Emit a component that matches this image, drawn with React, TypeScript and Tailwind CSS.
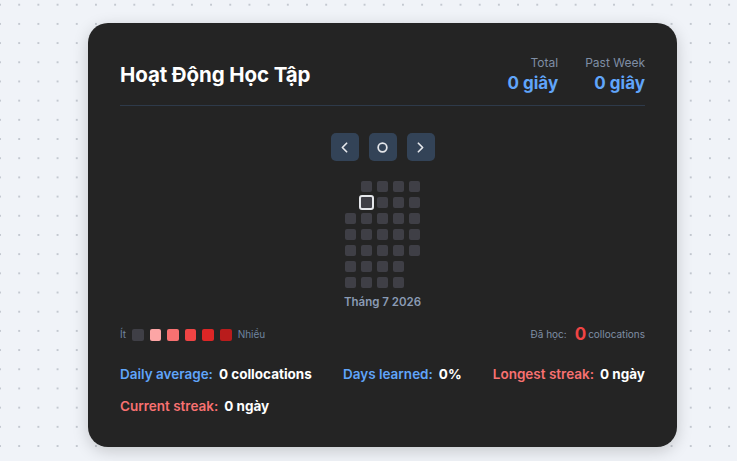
import React from "react";

const cellColors = ["#3f3f46", "#fca5a5", "#f87171", "#ef4444", "#dc2626", "#b91c1c"];

function Heatmap() {
  // July 2026, Monday-start rows, columns are weeks. July 1 = Wednesday (row 2)
  const startRow = 2;
  const days = 31;
  const cols: (number | null)[][] = [];
  for (let c = 0; c < 5; c++) {
    const col: (number | null)[] = [];
    for (let r = 0; r < 7; r++) {
      const idx = c * 7 + r - startRow;
      col.push(idx >= 0 && idx < days ? idx + 1 : null);
    }
    cols.push(col);
  }
  return (
    <div className="flex gap-[5px]">
      {cols.map((col, ci) => (
        <div key={ci} className="flex flex-col gap-[5px]">
          {col.map((d, ri) =>
            d === null ? (
              <div key={ri} className="w-[11px] h-[11px]" />
            ) : d === 7 ? (
              <div key={ri} className="w-[11px] h-[11px] relative">
                <div className="absolute -inset-[2px] rounded-[3px] border-2 border-[#e5e7eb] bg-[#3f3f46]" />
              </div>
            ) : (
              <div key={ri} className="w-[11px] h-[11px] rounded-[2px] bg-[#3f3f46]" />
            )
          )}
        </div>
      ))}
    </div>
  );
}

export default function App() {
  return (
    <div
      className="min-h-screen w-full bg-[#f0f3f8] bg-[radial-gradient(circle,#c3c8d0_1px,transparent_1.3px)] bg-[size:19.2px_19.2px] bg-[position:9.6px_-4.9px] pt-[23px] pb-[14px] pl-[88px]"
      style={{ fontFamily: "Inter, 'Noto Sans', sans-serif" }}
    >
      <div className="w-[589px] rounded-[20px] bg-[#242424] px-8 pt-8 pb-[31px] shadow-[0_4px_16px_rgba(0,0,0,0.18)]">
        <div className="flex items-center justify-between border-b border-[#2e3a4a] pb-[10px]">
          <h1 className="text-[20.5px] font-bold text-white tracking-[-0.1px]">Hoạt Động Học Tập</h1>
          <div className="flex gap-[27px]">
            <div className="text-right">
              <div className="text-[12px] leading-4 text-[#7f8ea4]">Total</div>
              <div className="text-[17px] leading-6 font-bold text-[#60a5fa]">0 giây</div>
            </div>
            <div className="text-right">
              <div className="text-[12px] leading-4 text-[#7f8ea4]">Past Week</div>
              <div className="text-[17px] leading-6 font-bold text-[#60a5fa]">0 giây</div>
            </div>
          </div>
        </div>

        <div className="mt-[27px] flex flex-col items-center">
          <div className="flex gap-[10px]">
            <button className="w-[28px] h-[28px] rounded-[5px] bg-[#334357] flex items-center justify-center">
              <svg width="17" height="17" viewBox="0 0 24 24" fill="none" stroke="#e5e7eb" strokeWidth="2.4" strokeLinecap="round" strokeLinejoin="round"><path d="M15 18l-6-6 6-6" /></svg>
            </button>
            <button className="w-[28px] h-[28px] rounded-[5px] bg-[#334357] flex items-center justify-center">
              <svg width="13" height="13" viewBox="0 0 24 24" fill="none" stroke="#e5e7eb" strokeWidth="3.2"><circle cx="12" cy="12" r="8" /></svg>
            </button>
            <button className="w-[28px] h-[28px] rounded-[5px] bg-[#334357] flex items-center justify-center">
              <svg width="17" height="17" viewBox="0 0 24 24" fill="none" stroke="#e5e7eb" strokeWidth="2.4" strokeLinecap="round" strokeLinejoin="round"><path d="M9 18l6-6-6-6" /></svg>
            </button>
          </div>
          <div className="mt-[20px]">
            <Heatmap />
          </div>
          <div className="mt-[6px] text-[11.5px] font-semibold text-[#8a9bb4]">Tháng 7 2026</div>
        </div>

        <div className="mt-[15px] flex items-center justify-between">
          <div className="flex items-center gap-[6px] text-[10px] text-[#6f84a0]">
            <span>Ít</span>
            {cellColors.map((c) => (
              <span key={c} className="w-[11.6px] h-[11.6px] rounded-[2px]" style={{ backgroundColor: c }} />
            ))}
            <span>Nhiều</span>
          </div>
          <div className="flex items-center text-[10px] text-[#7f8ea4]">
            <span>Đã học:</span>
            <span className="ml-[8px] mr-[2px] text-[17px] font-bold text-[#ef4444] leading-none">0</span>
            <span>collocations</span>
          </div>
        </div>

        <div className="mt-[21px] flex flex-wrap justify-between gap-y-[12px] text-[13.5px] leading-5 font-semibold">
          <div>
            <span className="text-[#60a5fa]">Daily average:</span>
            <span className="ml-[6px] text-white font-bold">0 collocations</span>
          </div>
          <div>
            <span className="text-[#60a5fa]">Days learned:</span>
            <span className="ml-[6px] text-white font-bold">0%</span>
          </div>
          <div>
            <span className="text-[#f87171]">Longest streak:</span>
            <span className="ml-[6px] text-white font-bold">0 ngày</span>
          </div>
          <div>
            <span className="text-[#f87171]">Current streak:</span>
            <span className="ml-[6px] text-white font-bold">0 ngày</span>
          </div>
        </div>
      </div>
    </div>
  );
}
